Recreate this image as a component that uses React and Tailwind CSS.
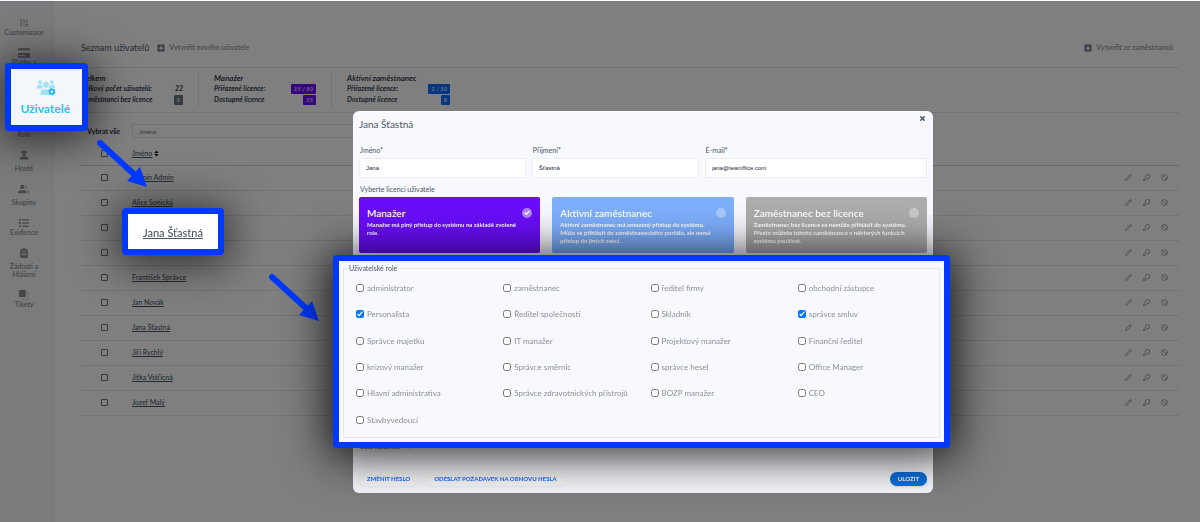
import { useState } from 'react'
import { FaUser, FaUserFriends, FaCreditCard, FaPlusSquare, FaList, FaSort } from 'react-icons/fa'
import { Ban, Pencil, SlidersVertical, Check, X } from 'lucide-react'

const users = [
  { id: 1, name: 'Admin Admin' },
  { id: 2, name: 'Alice Sonická' },
  { id: 3, name: '' },
  { id: 4, name: '' },
  { id: 5, name: 'František Správce' },
  { id: 6, name: 'Jan Novák' },
  { id: 7, name: 'Jana Šťastná' },
  { id: 8, name: 'Jiří Rychlý' },
  { id: 9, name: 'Jitka Vstřícná' },
  { id: 10, name: 'Jozef Malý' },
]

const roles = [
  'administrator', 'zaměstnanec', 'ředitel firmy', 'obchodní zástupce',
  'Personalista', 'Ředitel společnosti', 'Skladník', 'správce smluv',
  'Správce majetku', 'IT manažer', 'Projektový manažer', 'Finanční ředitel',
  'krizový manažer', 'Správce směrnic', 'správce hesel', 'Office Manager',
  'Hlavní administrativa', 'Správce zdravotnických přístrojů', 'BOZP manažer', 'CEO',
  'Stavbyvedoucí',
]

const licences = [
  {
    id: 'manager',
    title: 'Manažer',
    text: 'Manažer má plný přístup do systému na základě zvolené role.',
    color: 'bg-[#6a0dfb]',
    dot: 'bg-[#b284fc]',
  },
  {
    id: 'active',
    title: 'Aktivní zaměstnanec',
    text: 'Aktivní zaměstnanec má omezený přístup do systému. Může se přihlásit do zaměstnaneckého portálu, ale nemá přístup do jiných sekcí.',
    color: 'bg-[#7eaffd]',
    dot: 'bg-[#a9caff]',
  },
  {
    id: 'none',
    title: 'Zaměstnanec bez licence',
    text: 'Zaměstnanec bez licence se nemůže přihlásit do systému. Přesto můžete tohoto zaměstnance v některých funkcích systému používat.',
    color: 'bg-[#adadad]',
    dot: 'bg-[#c9c9c9]',
  },
]

function GuestIcon() {
  return (
    <svg viewBox="0 0 16 16" className="size-2.5" fill="currentColor">
      <path d="M4 4.500C4 2 5.600.8 8 .8s4 1.200 4 3.700l1 .7H3z" />
      <path d="M4.500 6h7a3.500 3.500 0 0 1-7 0z" />
      <path d="M1 15c0-3 2-4.500 4.500-4.500h5C13 10.500 15 12 15 15z" />
    </svg>
  )
}

function GroupIcon() {
  return (
    <svg viewBox="0 0 20 16" className="h-2.5 w-3" fill="currentColor">
      <circle cx="7" cy="4.500" r="3.700" />
      <path d="M0 15c0-3.500 2-5 4.500-5h5c2.500 0 4.500 1.500 4.500 5z" />
      <g opacity="0.5">
        <path d="M12 1.200a3.300 3.300 0 1 1 0 6.600c1-2 1-4.600 0-6.600z" />
        <path d="M14 10c3.500 0 6 1.500 6 5h-4.500c0-2-.5-3.800-1.500-5z" />
      </g>
    </svg>
  )
}

function RequestIcon() {
  return (
    <svg viewBox="0 0 16 16" className="size-2.5" fill="currentColor">
      <path fillRule="evenodd" d="M3 2h2.500a2.500 2 0 0 1 5 0H13a1 1 0 0 1 1 1v12a1 1 0 0 1-1 1H3a1 1 0 0 1-1-1V3a1 1 0 0 1 1-1zm2 2v1.500h6V4zM5 8v1h6V8zm0 2.500v1h6v-1z" />
    </svg>
  )
}

function TicketIcon() {
  return (
    <svg viewBox="0 0 16 16" className="size-2.5">
      <rect x="5.500" y="5.500" width="10" height="10" rx="1.500" fill="none" stroke="currentColor" opacity="0.5" />
      <rect width="11" height="11" rx="1.500" fill="currentColor" />
    </svg>
  )
}

function KeyIcon() {
  return (
    <svg viewBox="0 0 16 16" className="size-[7px]" fill="none" stroke="currentColor" strokeWidth="1.500" strokeLinejoin="round">
      <path d="M10 1a5 5 0 1 1-1.500 9.700L6 13H4v2H1v-3l4.500-4.500A5 5 0 0 1 10 1z" />
    </svg>
  )
}

function UsersGearIcon() {
  return (
    <svg viewBox="0 0 36 30" className="h-4 w-5">
      <g fill="#9fe3f5">
        <circle cx="7" cy="4" r="3.500" />
        <circle cx="29" cy="4" r="3.500" />
        <circle cx="18" cy="9" r="5.500" />
        <path d="M1 16v-3c0-2.500 1.500-4 4-4h4c1 0 2 .4 2.500 1-.5 2.500.2 4.500 1.500 6z" />
        <path d="M35 16v-3c0-2.500-1.500-4-4-4h-4c-1 0-2 .4-2.500 1 .5 2.500-.2 4.500-1.500 6z" />
        <path d="M8 28v-4c0-4 2-6.500 6-6.500h8c1 0 2 .2 2.800.6-3 2-3 7 .2 9.900z" />
      </g>
      <circle cx="29" cy="22" r="4" fill="none" stroke="#1fb6e4" strokeWidth="3.500" />
      <circle cx="29" cy="22" r="6" fill="none" stroke="#1fb6e4" strokeWidth="2" strokeDasharray="3 3.280" />
    </svg>
  )
}

const menu = [
  { label: 'Customizace', icon: <SlidersVertical className="size-2.5" strokeWidth={2} /> },
  { label: 'Platby a licence', icon: <FaCreditCard className="size-3" /> },
  { label: '', icon: <FaUserFriends className="size-2.5" />, active: true },
  { label: 'Role', icon: <FaUser className="size-2.5" />, tall: true },
  { label: 'Hosté', icon: <GuestIcon />, tall: true },
  { label: 'Skupiny', icon: <GroupIcon />, tall: true },
  { label: 'Evidence', icon: <FaList className="size-2.5" /> },
  { label: 'Žádosti a Hlášení', icon: <RequestIcon />, tall: true },
  { label: 'Tikety', icon: <TicketIcon /> },
]

function Sidebar() {
  return (
    <nav className="flex w-[55px] shrink-0 flex-col items-center gap-3 bg-[#f3f6fa] pr-[7px] pt-[18px] text-[#8b9096]">
      {menu.map(item =>
        item.active ? (
          <div key="active" className="h-[18px]" />
        ) : (
          <a key={item.label} href="#" className="flex w-full flex-col items-center text-center text-[7px] font-semibold leading-2">
            <span className={item.tall ? 'mb-1 flex h-2.5 items-center' : 'flex h-2.5 items-center'}>{item.icon}</span>
            <span className={item.label.includes(' a ') ? 'w-9' : ''}>{item.label}</span>
          </a>
        )
      )}
    </nav>
  )
}

function Stat({ title, rows }) {
  return (
    <div className="w-[118px] border-r border-dotted border-gray-300 pr-[15px] text-[7px] font-bold italic leading-[11px] text-gray-700 last:border-0">
      <h2 className="text-[8px] font-semibold leading-[10px] text-gray-800">{title}</h2>
      {rows.map(([label, value, badge]) => (
        <div key={label} className="flex items-center justify-between whitespace-nowrap">
          <span>{label}</span>
          <span className={badge}>{value}</span>
        </div>
      ))}
    </div>
  )
}

const purple = 'rounded-[1px] bg-[#6a0dfb] px-[3px] leading-[10px] text-[6px] text-[#e0d0ff]'
const blue = 'rounded-[1px] bg-[#0a6cff] px-[3px] leading-[10px] text-[6px] text-[#cfe2ff]'
const gray = 'rounded-[1px] bg-gray-500 px-[3px] leading-[10px] text-[6px] text-gray-100'

function Box({ label }) {
  return (
    <input
      type="checkbox"
      aria-label={label}
      className="block size-[7px] appearance-none rounded-[1px] border border-gray-500 bg-white"
    />
  )
}

function UserTable() {
  return (
    <table className="w-full table-fixed text-left text-[7px] text-gray-600">
      <thead>
        <tr className="h-[27px] border-b border-gray-300">
          <th className="w-[51px] pl-5 pt-1"><Box label="Vybrat vše" /></th>
          <th className="pt-1">
            <button className="flex items-center font-medium underline">
              Jméno <FaSort className="ml-px size-[7px] text-black" />
            </button>
          </th>
          <th className="w-[60px]"></th>
        </tr>
      </thead>
      <tbody>
        {users.map(user => (
          <tr key={user.id} className="h-[25px] border-b border-gray-200">
            <td className="pl-5"><Box label={user.name || 'Uživatel'} /></td>
            <td><a href="#" className="font-medium underline">{user.name}</a></td>
            <td>
              <div className="flex items-center gap-[11px] pl-1.5 text-gray-500">
                <button aria-label="Upravit"><Pencil className="size-[7px]" /></button>
                <button aria-label="Změnit heslo"><KeyIcon /></button>
                <button aria-label="Zablokovat"><Ban className="size-[7px]" /></button>
              </div>
            </td>
          </tr>
        ))}
      </tbody>
    </table>
  )
}

function Field({ id, label, value }) {
  return (
    <div>
      <label htmlFor={id} className="block pl-px text-[7px] leading-[15px] text-gray-600">{label}</label>
      <input
        id={id}
        defaultValue={value}
        className="block h-5 w-full rounded-xs border border-[#eceef2] bg-white px-1.5 font-['Liberation_Sans',sans-serif] text-[6px] text-gray-800"
      />
    </div>
  )
}

function UserDialog() {
  const [licence, setLicence] = useState('manager')
  const [checked, setChecked] = useState(['Personalista', 'správce smluv'])

  const toggle = role =>
    setChecked(checked.includes(role) ? checked.filter(r => r !== role) : [...checked, role])

  return (
    <div role="dialog" aria-label="Jana Šťastná" className="w-[580px] rounded-md bg-[#f8f9fe] px-1.5 pb-[7px]">
      <div className="flex h-8 justify-between">
        <h2 className="pt-[5px] text-[10px] leading-4 text-gray-600">Jana Šťastná</h2>
        <button aria-label="Zavřít" className="h-3.5 pr-px text-gray-600"><X className="size-[7px]" strokeWidth={5} /></button>
      </div>

      <div className="grid grid-cols-[3fr_3fr_4fr] gap-1.5">
        <Field id="name" label="Jméno*" value="Jana" />
        <Field id="surname" label="Příjmení*" value="Šťastná" />
        <Field id="email" label="E-mail*" value="jana@teamffice.com" />
      </div>

      {/* Licence cards */}
      <p className="pb-0.5 pl-px pt-1.5 text-[7px] leading-[11px] text-gray-600">Vyberte licenci uživatele</p>
      <div className="grid grid-cols-3 gap-3">
        {licences.map(l => (
          <button
            key={l.id}
            onClick={() => setLicence(l.id)}
            className={`flex h-14 flex-col rounded-xs pl-2 pt-2.5 text-left text-white ${l.color}`}
          >
            <span className="flex w-full items-center justify-between pr-2 text-[10px] font-semibold leading-3">
              {l.title}
              <span className={`flex size-2.5 items-center justify-center rounded-full ${l.dot}`}>
                {licence === l.id && <Check className="size-1.5" strokeWidth={5} />}
              </span>
            </span>
            <span className="mt-0.5 pr-4 text-[6px] font-bold leading-2">{l.text}</span>
          </button>
        ))}
      </div>

      {/* Highlighted roles */}
      <div className="relative z-10 -ml-[26px] -mr-[23px] mt-0.5 rounded-sm border-6 border-[#0038ff] bg-[#f8f9fe] px-1 pb-1 shadow-[0_4px_44px_6px_rgba(0,0,0,0.8)]">
        <fieldset className="border border-gray-200 pb-1">
          <legend className="ml-[3px] px-0.5 text-[7px] leading-[14px] text-gray-600">Uživatelské role</legend>
          <div className="-mr-1.5 grid h-[158px] grid-cols-4 grid-rows-6 pl-3">
            {roles.map(role => (
              <label key={role} className="flex items-center gap-[3px] whitespace-nowrap text-[8px] text-[#8a9099]">
                <input
                  type="checkbox"
                  checked={checked.includes(role)}
                  onChange={() => toggle(role)}
                  className="size-2 accent-[#0075ff]"
                />
                {role}
              </label>
            ))}
          </div>
        </fieldset>
      </div>

      <button className="-mt-1.5 flex items-center gap-2 pl-px text-[6px] font-semibold leading-[10px] text-gray-600">
        Další nastavení <span>›</span>
      </button>

      <div className="mt-5 flex items-center gap-2 text-[6px] font-bold leading-3.5">
        <button className="rounded-full bg-[#fafafa] px-2 text-[#1a6dff] shadow-xs">ZMĚNIT HESLO</button>
        <button className="rounded-full bg-[#fafafa] px-2 text-[#1a6dff] shadow-xs">ODESLAT POŽADAVEK NA OBNOVU HESLA</button>
        <button className="ml-auto rounded-full bg-[#0a70e0] px-2 text-white shadow-sm">ULOŽIT</button>
      </div>
    </div>
  )
}

function Arrow({ className }) {
  return (
    <svg viewBox="0 0 52 50" className={`absolute h-[50px] w-[52px] ${className}`}>
      <path d="M4 4L40 37" stroke="#0038ff" strokeWidth="6" strokeLinecap="round" />
      <path d="M51 48L31 42L44 28z" fill="#0038ff" />
    </svg>
  )
}

function App() {
  return (
    <div className="relative flex min-h-screen bg-white font-['Lato',sans-serif]">
      <Sidebar />

      <main className="min-w-0 flex-1 pl-[26px] pr-[21px]">
        <header className="flex h-[68px] items-center border-b border-gray-200 pt-7 text-[7px] font-bold text-gray-400">
          <h1 className="text-[9px] font-normal text-gray-600">Seznam uživatelů</h1>
          <button className="ml-2 flex items-center gap-1"><FaPlusSquare className="size-2 text-gray-500" /> Vytvořit nového uživatele</button>
          <button className="ml-auto mr-1.5 flex items-center gap-1"><FaPlusSquare className="size-2 text-gray-500" /> Vytvořit ze zaměstnanců</button>
        </header>

        <section className="flex h-[45px] gap-[15px] border-b border-gray-200 py-[5px]">
          <Stat title="Celkem" rows={[['Celkový počet uživatelů:', '22', ''], ['Zaměstnanci bez licence', '5', gray]]} />
          <Stat title="Manažer" rows={[['Přiřazené licence:', '15 / 50', purple], ['Dostupné licence', '35', purple]]} />
          <Stat title="Aktivní zaměstnanec" rows={[['Přiřazené licence:', '2 / 10', blue], ['Dostupné licence', '8', blue]]} />
        </section>

        <div className="flex items-center pl-1.5 pt-[11px] text-[7px]">
          <label htmlFor="filter" className="w-[45px] whitespace-nowrap font-bold text-gray-800">Vybrat vše</label>
          <input id="filter" placeholder="Jméno" className="h-3.5 w-[280px] border border-gray-200 px-1.5 text-[6px] placeholder:text-gray-500" />
        </div>
        <UserTable />
      </main>

      <div className="fixed inset-x-0 bottom-0 top-px bg-black/50" />

      <div className="absolute inset-0 flex items-start justify-center pl-[86px] pt-[111px]">
        <UserDialog />
      </div>

      {/* Tutorial callouts */}
      <a href="#" className="absolute left-[5px] top-[63px] flex h-[68px] w-[83px] flex-col items-center justify-center gap-1 rounded-sm border-6 border-[#0038ff] bg-[#f3f7fb] pr-0.5 pt-1 text-[12px] font-bold text-[#2cc0ea] shadow-[0_4px_40px_6px_rgba(0,0,0,0.6)]">
        <UsersGearIcon />
        Uživatelé
      </a>
      <a href="#" className="absolute left-[122px] top-[208px] flex h-[47px] w-[102px] items-center justify-center rounded-sm border-6 border-[#0038ff] bg-white pt-1 text-[11px] font-medium text-gray-600 underline shadow-[0_4px_40px_6px_rgba(0,0,0,0.6)]">
        Jana Šťastná
      </a>
      <Arrow className="left-[96px] top-[139px]" />
      <Arrow className="left-[268px] top-[273px]" />
    </div>
  )
}

export default App
